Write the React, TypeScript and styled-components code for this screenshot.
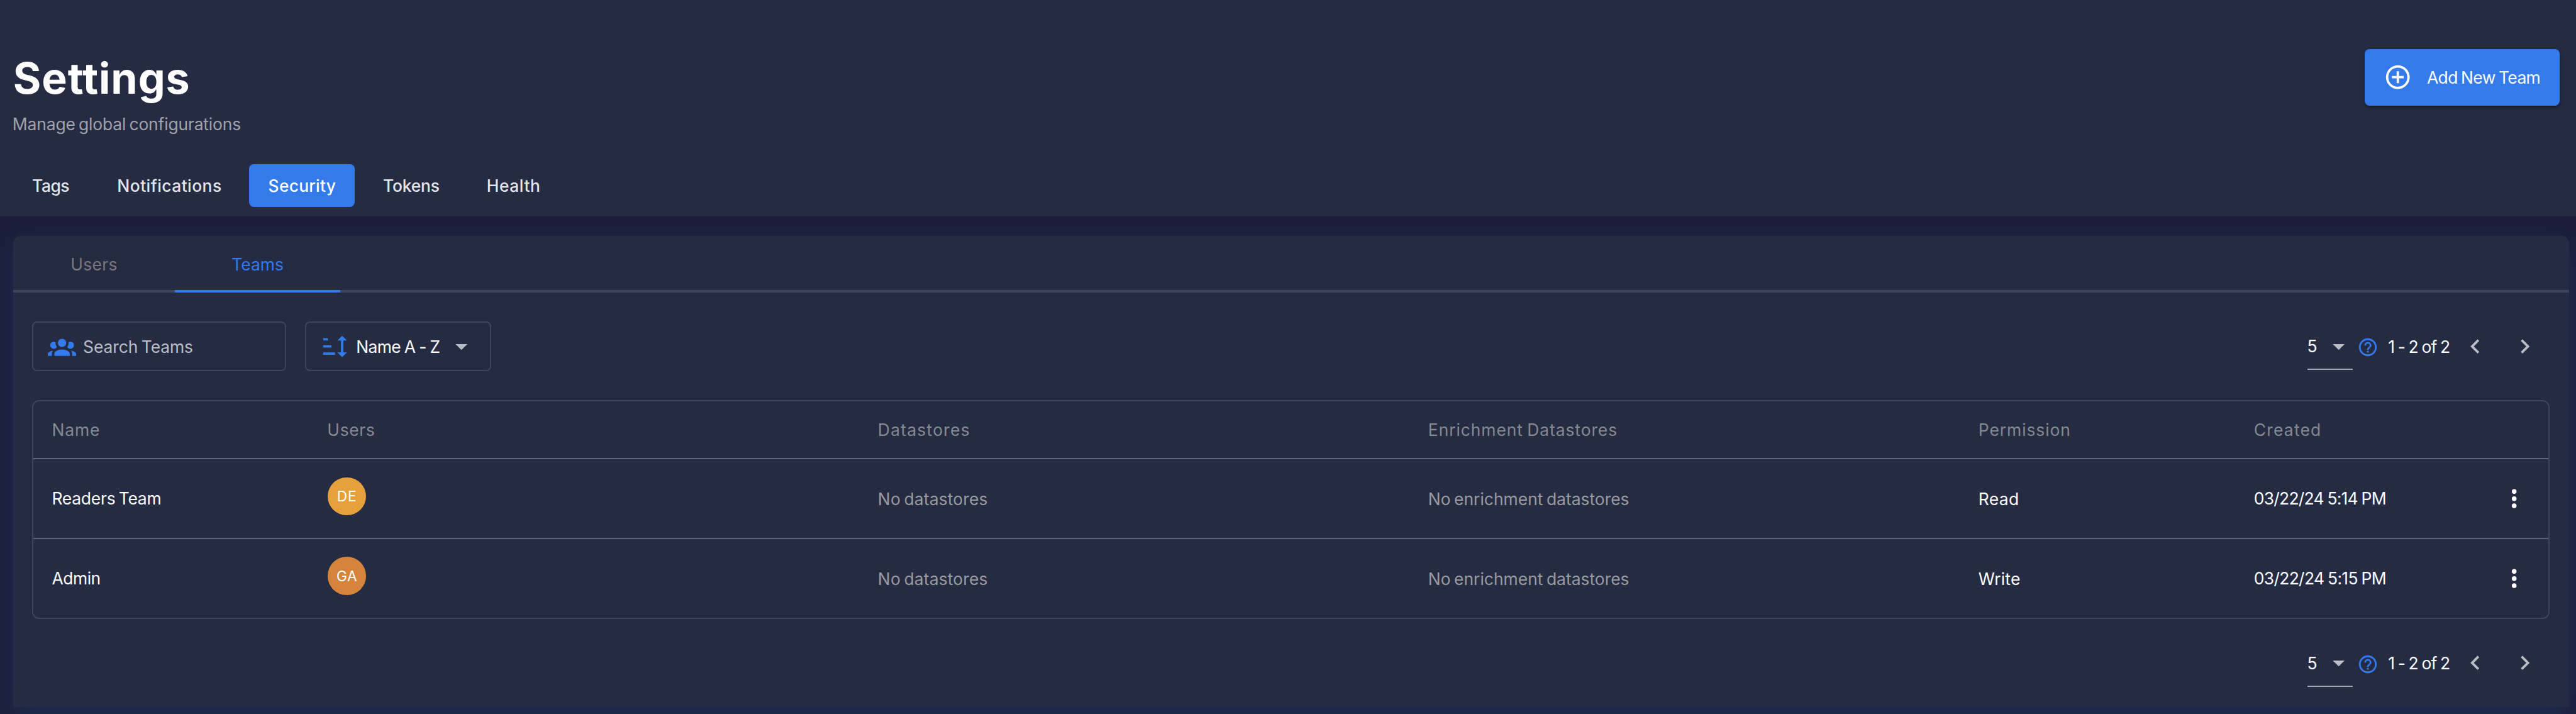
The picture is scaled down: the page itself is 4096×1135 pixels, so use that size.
import React from "react";
import styled, { createGlobalStyle } from "styled-components";

const c = {
  page: "#1b1e38",
  surface: "#242b43",
  blue: "#347aeb",
  border: "#3f455a",
  rowLine: "#5f6478",
  text: "#ffffff",
  control: "#bbbdc4",
};

/* 1rem is ten design pixels of a 4330px wide layout */
const GlobalStyle = createGlobalStyle`
  * { box-sizing: border-box; }
  html { font-size: calc(100vw / 433); }
  body {
    margin: 0;
    overflow: hidden;
    background: ${c.page};
    color: ${c.text};
    font-family: Inter, "Liberation Sans", sans-serif;
    font-size: 2.8rem;
    font-weight: 400;
    line-height: 4rem;
  }
  button { font: inherit; color: inherit; background: none; border: 0; padding: 0; margin: 0; text-align: left; }
  svg { display: block; flex: none; }
`;

const Page = styled.div`
  height: 100vh;
  overflow: hidden;
  background: ${c.page};
`;

const Text = styled.span<{ $ls?: number; $ws?: number; $drop?: number }>`
  display: block;
  white-space: pre;
  letter-spacing: ${(p) => (p.$ls ?? 0) / 10}rem;
  word-spacing: ${(p) => (p.$ws ?? -2) / 10}rem;
  padding-top: ${(p) => (p.$drop ?? 0) / 10}rem;
`;

const Header = styled.header`
  height: 36.4rem;
  padding: 8.2rem 2.8rem 1.6rem 2.2rem;
  background: ${c.surface};
`;

const HeaderTop = styled.div`
  display: flex;
  justify-content: space-between;
  align-items: flex-start;
  height: 14.6rem;
`;

const Title = styled.h1`
  margin: 0.1rem 0 0.9rem;
  font-size: 7.2rem;
  font-weight: 700;
  line-height: 9.6rem;
  letter-spacing: 0.095rem;
`;

const Subtitle = styled.div`
  margin-left: -0.1rem;
  color: #9fa2aa;
`;

const PrimaryButton = styled.button`
  display: flex;
  align-items: center;
  gap: 2.45rem;
  width: 32.7rem;
  height: 9.6rem;
  padding-left: 3.2rem;
  border-radius: 0.8rem;
  background: ${c.blue};
  color: #fff;
  box-shadow: 0 0.6rem 0.2rem -0.4rem rgba(0, 0, 0, 0.2), 0 0.4rem 0.4rem rgba(0, 0, 0, 0.14),
    0 0.2rem 1rem rgba(0, 0, 0, 0.12);
`;

const Nav = styled.nav`
  display: flex;
  gap: 1.6rem;
  margin-top: 4.8rem;
`;

const NavItem = styled.button<{ $w: number; $active?: boolean }>`
  display: flex;
  align-items: center;
  width: ${(p) => p.$w / 10}rem;
  height: 7.2rem;
  padding-left: 3.2rem;
  border-radius: 0.8rem;
  font-weight: 500;
  color: ${(p) => (p.$active ? "#fff" : "#e3e4e8")};
  background: ${(p) => (p.$active ? c.blue : "transparent")};
`;

const Panel = styled.main`
  margin: 3.2rem 1.2rem 0 2.2rem;
  height: 79.2rem;
  border-radius: 1.2rem 1.2rem 0 0;
  background: ${c.surface};
  box-shadow: 0 1.4rem 4rem rgb(30, 46, 82);
`;

const TabBar = styled.div`
  display: flex;
  height: 9.6rem;
  box-shadow: inset 0 -4px 0 ${c.border};
`;

const Tab = styled.button<{ $w: number; $active?: boolean }>`
  display: flex;
  align-items: center;
  justify-content: center;
  width: ${(p) => p.$w / 10}rem;
  height: 9.6rem;
  color: ${(p) => (p.$active ? c.blue : "#77797f")};
  box-shadow: ${(p) => (p.$active ? `inset 0 -4px 0 ${c.blue}` : "none")};
`;

const Body = styled.div`
  padding: 4.8rem 3.2rem 3.2rem;
`;

const Toolbar = styled.div`
  display: flex;
  align-items: center;
  gap: 3.2rem;
  height: 8.4rem;
  margin-bottom: 4.8rem;
`;

const Field = styled.div<{ $w: number; $muted?: boolean }>`
  display: flex;
  align-items: center;
  gap: 1.15rem;
  width: ${(p) => p.$w / 10}rem;
  height: 8.4rem;
  padding: 0 2.4rem;
  border: 2px solid ${c.border};
  border-radius: 0.8rem;
  color: ${(p) => (p.$muted ? "#bbbdc4" : "#fff")};
`;

const Push = styled.div`
  margin-left: auto;
`;

const Pager = styled.div`
  display: flex;
  align-items: center;
  justify-content: flex-end;
  height: 8.4rem;
  margin-left: auto;
  padding-right: 1.8rem;
`;

const PageSize = styled.div`
  display: flex;
  align-items: center;
  justify-content: space-between;
  width: 7.7rem;
  height: 8rem;
  margin-right: 0.7rem;
  padding-top: 0.2rem;
  border-bottom: 2px solid #a5a9b1;
`;

const Help = styled.div`
  padding-top: 0.4rem;
  margin-right: 1.6rem;
`;

const Range = styled.div`
  width: 12.2rem;
`;

const PageButton = styled.button`
  & + & {
    margin-left: 3.6rem;
  }
`;

const Table = styled.section`
  height: 36.8rem;
  margin-bottom: 3.2rem;
  border: 2px solid ${c.border};
  border-radius: 1.2rem;
`;

const Row = styled.div<{ $head?: boolean; $line?: boolean }>`
  display: grid;
  grid-template-columns: 46.3rem 92.55rem 92.5rem 92.5rem 46.3rem 1fr;
  align-items: center;
  height: ${(p) => (p.$head ? 9.8 : p.$line ? 13.4 : 13.2)}rem;
  padding-left: 3.1rem;
  border-bottom: ${(p) => (p.$line ? `2px solid ${c.rowLine}` : "0")};
  color: ${(p) => (p.$head ? "#86898f" : "#fff")};
`;

const Muted = styled.div`
  color: #999a9e;
`;

const Last = styled.div`
  display: flex;
  align-items: center;
  justify-content: space-between;
  padding-right: 3.4rem;
`;

const Avatar = styled.div<{ $color: string }>`
  display: flex;
  align-items: center;
  justify-content: center;
  width: 6.4rem;
  height: 6.4rem;
  margin: 0 0 0.8rem 0.1rem;
  border-radius: 50%;
  background: ${(p) => p.$color};
  font-size: 2.4rem;
`;

const Svg = styled.svg<{ $size: number; $color: string }>`
  width: ${(p) => p.$size / 10}rem;
  height: ${(p) => p.$size / 10}rem;
  fill: ${(p) => p.$color};
`;

const icons = {
  plusCircle:
    "M12,20C7.59,20 4,16.41 4,12C4,7.59 7.59,4 12,4C16.41,4 20,7.59 20,12C20,16.41 16.41,20 12,20M12,2A10,10 0 0,0 2,12A10,10 0 0,0 12,22A10,10 0 0,0 22,12A10,10 0 0,0 12,2M13,7H11V11H7V13H11V17H13V13H17V11H13V7Z",
  group:
    "M12,5.5A3.5,3.5 0 0,1 15.5,9A3.5,3.5 0 0,1 12,12.5A3.5,3.5 0 0,1 8.5,9A3.5,3.5 0 0,1 12,5.5M5,8C5.56,8 6.08,8.15 6.53,8.42C6.38,9.85 6.8,11.27 7.66,12.38C7.16,13.34 6.16,14 5,14A3,3 0 0,1 2,11A3,3 0 0,1 5,8M19,8A3,3 0 0,1 22,11A3,3 0 0,1 19,14C17.84,14 16.84,13.34 16.34,12.38C17.2,11.27 17.62,9.85 17.47,8.42C17.92,8.15 18.44,8 19,8M5.5,18.25C5.5,16.18 8.41,14.5 12,14.5C15.59,14.5 18.5,16.18 18.5,18.25V20H5.5V18.25M0,20V18.5C0,17.11 1.89,15.94 4.45,15.6C3.86,16.28 3.5,17.22 3.5,18.25V20H0M24,20H20.5V18.25C20.5,17.22 20.14,16.28 19.55,15.6C22.11,15.94 24,17.11 24,18.5V20Z",
  sort: "M18 21L14 17H17V7H14L18 3L22 7H19V17H22M2 19V17H12V19M2 13V11H9V13M2 7V5H6V7H2Z",
  caret: "M7,10L12,15L17,10H7Z",
  help: "M11,18H13V16H11V18M12,2A10,10 0 0,0 2,12A10,10 0 0,0 12,22A10,10 0 0,0 22,12A10,10 0 0,0 12,2M12,20C7.59,20 4,16.41 4,12C4,7.59 7.59,4 12,4C16.41,4 20,7.59 20,12C20,16.41 16.41,20 12,20M12,6A4,4 0 0,0 8,10H10A2,2 0 0,1 12,8A2,2 0 0,1 14,10C14,12 11,11.75 11,15H13C13,12.75 16,12.5 16,10A4,4 0 0,0 12,6Z",
  left: "M15.41,16.58L10.83,12L15.41,7.41L14,6L8,12L14,18L15.41,16.58Z",
  right: "M8.59,16.58L13.17,12L8.59,7.41L10,6L16,12L10,18L8.59,16.58Z",
  dots: "M12,16A2,2 0 0,1 14,18A2,2 0 0,1 12,20A2,2 0 0,1 10,18A2,2 0 0,1 12,16M12,10A2,2 0 0,1 14,12A2,2 0 0,1 12,14A2,2 0 0,1 10,12A2,2 0 0,1 12,10M12,4A2,2 0 0,1 14,6A2,2 0 0,1 12,8A2,2 0 0,1 10,6A2,2 0 0,1 12,4Z",
};

function Icon({ name, size = 48, color = "#fff" }: { name: keyof typeof icons; size?: number; color?: string }) {
  return (
    <Svg viewBox="0 0 24 24" $size={size} $color={color} aria-hidden="true">
      <path d={icons[name]} />
    </Svg>
  );
}

function Pagination() {
  return (
    <Pager>
      <PageSize>
        <Text $drop={2}>5</Text>
        <Icon name="caret" color={c.control} />
      </PageSize>
      <Help>
        <Icon name="help" size={36} color={c.blue} />
      </Help>
      <Range>
        <Text $ls={-0.93} $ws={-1} $drop={2}>1 - 2 of 2</Text>
      </Range>
      <PageButton>
        <Icon name="left" color={c.control} />
      </PageButton>
      <PageButton>
        <Icon name="right" color={c.control} />
      </PageButton>
    </Pager>
  );
}

const nav = [
  { label: "Tags", w: 127, ls: -0.53 },
  { label: "Notifications", w: 238, ls: 0.44 },
  { label: "Security", w: 177, ls: 0.24, active: true },
  { label: "Tokens", w: 158, ls: -0.25 },
  { label: "Health", w: 155, ls: 0.56 },
];

const columns = [
  { label: "Name", ls: 0.91 },
  { label: "Users", ls: 0.66 },
  { label: "Datastores", ls: 1.3 },
  { label: "Enrichment Datastores", ls: 0.95 },
  { label: "Permission", ls: 0.94 },
  { label: "Created", ls: 1.24 },
];

const teams = [
  { name: "Readers Team", nls: -0.27, user: "DE", uls: 0.9, color: "#e6a03c", permission: "Read", pls: 0.35, created: "03/22/24 5:14 PM", cls: -0.83 },
  { name: "Admin", nls: -0.49, user: "GA", uls: 0.5, color: "#d6833b", permission: "Write", pls: 0.18, created: "03/22/24 5:15 PM", cls: -0.76 },
];

export default function App() {
  return (
    <Page>
      <GlobalStyle />
      <Header>
        <HeaderTop>
          <div>
            <Title>Settings</Title>
            <Subtitle>
              <Text $ls={-0.2} $drop={1}>Manage global configurations</Text>
            </Subtitle>
          </div>
          <PrimaryButton>
            <Icon name="plusCircle" />
            <Text $ls={-0.7} $ws={-1.5} $drop={2}>Add New Team</Text>
          </PrimaryButton>
        </HeaderTop>
        <Nav>
          {nav.map((n) => (
            <NavItem key={n.label} $w={n.w} $active={n.active}>
              <Text $ls={n.ls} $drop={2}>{n.label}</Text>
            </NavItem>
          ))}
        </Nav>
      </Header>
      <Panel>
        <TabBar>
          <Tab $w={272}>
            <Text $ls={0.29} $drop={2}>Users</Text>
          </Tab>
          <Tab $w={278} $active>
            <Text $drop={2}>Teams</Text>
          </Tab>
        </TabBar>
        <Body>
          <Toolbar>
            <Field $w={427} $muted>
              <Icon name="group" color={c.blue} />
              <Text $ls={-0.1} $drop={2}>Search Teams</Text>
            </Field>
            <Field $w={313}>
              <Icon name="sort" color={c.blue} />
              <Text $ls={-0.7} $ws={-1} $drop={2}>Name A - Z</Text>
              <Push>
                <Icon name="caret" color={c.control} />
              </Push>
            </Field>
            <Pagination />
          </Toolbar>
          <Table>
            <Row $head $line>
              {columns.map((h) => (
                <Text key={h.label} $ls={h.ls} $drop={2}>{h.label}</Text>
              ))}
            </Row>
            {teams.map((t, i) => (
              <Row key={t.name} $line={i < teams.length - 1}>
                <Text $ls={t.nls}>{t.name}</Text>
                <Avatar $color={t.color}>
                  <Text $ls={t.uls}>{t.user}</Text>
                </Avatar>
                <Muted>
                  <Text $ls={0.12} $drop={2}>No datastores</Text>
                </Muted>
                <Muted>
                  <Text $ls={-0.03} $drop={2}>No enrichment datastores</Text>
                </Muted>
                <Text $ls={t.pls} $drop={2}>{t.permission}</Text>
                <Last>
                  <Text $ls={t.cls} $ws={-1}>{t.created}</Text>
                  <Icon name="dots" />
                </Last>
              </Row>
            ))}
          </Table>
          <Pagination />
        </Body>
      </Panel>
    </Page>
  );
}
